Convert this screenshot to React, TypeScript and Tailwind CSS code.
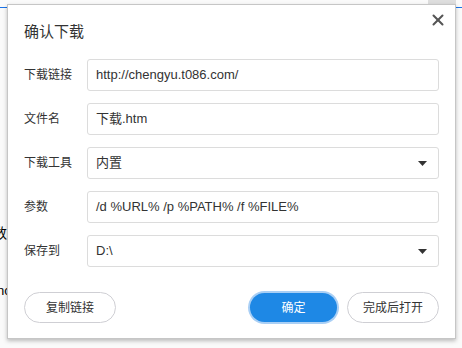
import { X } from 'lucide-react';

const cjk = '"Liberation Sans", "Noto Sans CJK SC", sans-serif';

function Field({ label, value, select }: { label: string; value: string; select?: boolean }) {
    return (
        <div className="flex items-center">
            <div className="w-[63px] text-[12px] text-[#333]">{label}</div>
            <div className="flex h-[32px] flex-1 items-center rounded-[3px] border border-[#dcdcdc] bg-white pl-[8px] pr-[8px]">
                <span className="flex-1 text-[13px] text-[#333]">{value}</span>
                {select && (
                    <svg width="9" height="5" viewBox="0 0 9 5" className="mr-[3px]">
                        <path d="M0 0h9L4.5 5z" fill="#333" />
                    </svg>
                )}
            </div>
        </div>
    );
}

export default function App() {
    return (
        <div className="relative h-[348px] w-[462px] overflow-hidden bg-[#fafafa]" style={{ fontFamily: cjk }}>
            {/* page behind the dialog */}
            <div className="absolute left-0 top-[7px] h-px w-[8px] bg-[#1a73e8]" />
            <div className="absolute right-0 top-[7px] h-px w-[8px] bg-[#1a73e8]" />
            <div className="absolute left-[428px] top-0 h-[5px] w-[28px] bg-[#dedede]" />
            <div className="absolute left-[-7px] top-[223px] text-[14px] text-black">数</div>
            <div className="absolute left-[-3px] top-[281px] text-[13px] text-black">nc</div>

            <div className="absolute left-[7px] top-[4px] flex h-[335px] w-[449px] flex-col border border-[#c6c6c6] bg-white px-[16px] pb-[15px] pt-[17px] shadow-[0_2px_4px_rgba(0,0,0,0.25)]">
                <X size={18} strokeWidth={2.7} className="absolute right-[8px] top-[6px] text-[#555]" />
                <div className="text-[15px] leading-[20px] text-[#333]">确认下载</div>
                <div className="mt-[17px] flex flex-col gap-[12px]">
                    <Field label="下载链接" value="http://chengyu.t086.com/" />
                    <Field label="文件名" value="下载.htm" />
                    <Field label="下载工具" value="内置" select />
                    <Field label="参数" value="/d %URL% /p %PATH% /f %FILE%" />
                    <Field label="保存到" value="D:\" select />
                </div>
                <div className="mt-auto flex items-center">
                    <button className="h-[31px] w-[92px] rounded-full border border-[#cfcfd4] bg-white text-[12px] text-[#333]">复制链接</button>
                    <div className="flex-1" />
                    <button className="h-[29px] w-[87px] rounded-full bg-[#1e88e5] text-[12px] text-white shadow-[0_0_0_2px_#a9cff5]">确定</button>
                    <button className="ml-[10px] h-[31px] w-[92px] rounded-full border border-[#cfcfd4] bg-white text-[12px] text-[#333]">完成后打开</button>
                </div>
            </div>
        </div>
    );
}
